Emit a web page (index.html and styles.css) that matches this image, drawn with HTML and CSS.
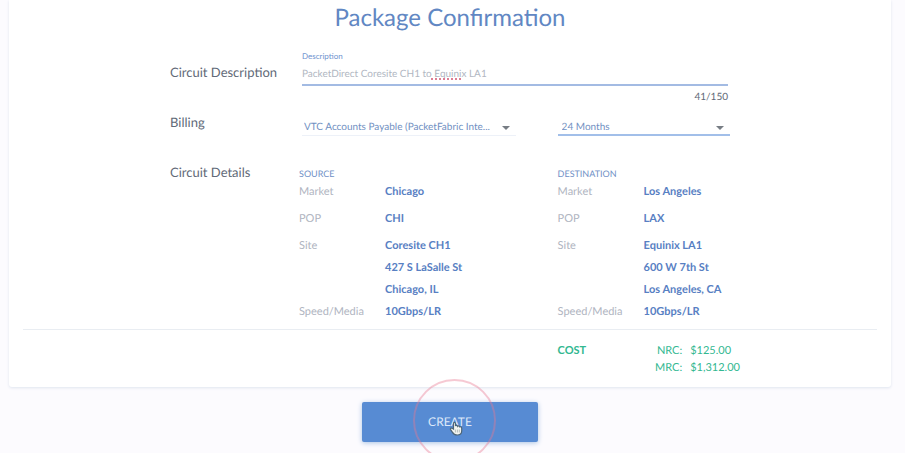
FILE: index.html
```html
<!DOCTYPE html>
<html lang="en">
<head>
<meta charset="utf-8">
<title>Package Confirmation</title>
<link rel="stylesheet" href="styles.css">
</head>
<body>
<form class="page">
  <main class="card">
    <h1 class="title">Package Confirmation</h1>

    <div class="form">
      <div class="row row-description">
        <label class="row-label" for="description">Circuit Description</label>
        <div class="field">
          <label class="field-caption" for="description">Description</label>
          <div class="input-wrap">
            <input class="text-input" id="description" type="text" maxlength="150" value="PacketDirect Coresite CH1 to Equinix LA1" spellcheck="false">
            <span class="squiggle"></span>
          </div>
          <div class="counter">41/150</div>
        </div>
      </div>

      <div class="row row-billing">
        <label class="row-label" for="account">Billing</label>
        <div class="columns">
          <div class="select-wrap select-account">
            <select id="account">
              <option>VTC Accounts Payable (PacketFabric Inte...</option>
            </select>
          </div>
          <div class="select-wrap select-term">
            <select id="term" aria-label="Term">
              <option>24 Months</option>
            </select>
          </div>
        </div>
      </div>

      <div class="row row-details">
        <h2 class="row-label">Circuit Details</h2>
        <div class="columns">
          <section>
            <h3 class="endpoint">SOURCE</h3>
            <dl class="details">
              <dt>Market</dt><dd>Chicago</dd>
              <dt>POP</dt><dd>CHI</dd>
              <dt>Site</dt><dd>Coresite CH1<br>427 S LaSalle St<br>Chicago, IL</dd>
              <dt>Speed/Media</dt><dd>10Gbps/LR</dd>
            </dl>
          </section>
          <section>
            <h3 class="endpoint">DESTINATION</h3>
            <dl class="details">
              <dt>Market</dt><dd>Los Angeles</dd>
              <dt>POP</dt><dd>LAX</dd>
              <dt>Site</dt><dd>Equinix LA1<br>600 W 7th St<br>Los Angeles, CA</dd>
              <dt>Speed/Media</dt><dd>10Gbps/LR</dd>
            </dl>
          </section>
        </div>
      </div>
    </div>

    <hr class="divider">

    <div class="form">
      <div class="row">
        <div class="columns cost-columns">
          <div class="cost">
            <strong>COST</strong>
            <dl class="prices">
              <dt>NRC:</dt><dd>$125.00</dd>
              <dt>MRC:</dt><dd>$1,312.00</dd>
            </dl>
          </div>
        </div>
      </div>
    </div>
  </main>

  <div class="actions">
    <button class="create" type="button">CREATE
      <span class="ripple"></span>
      <svg class="pointer" viewBox="0 0 14 16" aria-hidden="true">
        <path d="M4.500 8V3.500C4.500 2 6.500 2 6.500 3.500V6c.4-.9 2-.8 2.200.3.600-.7 1.900-.4 2.100.600.9-.5 1.900.1 1.900 1.300V11c0 2.500-1.500 4-4.500 4-2.700 0-3.700-1-4.900-2.900L1.600 9.600C.9 8.300 2.500 7.200 4.500 9Z" fill="#f4f5f0" stroke="#4d6577" stroke-width="1.200"/>
        <path d="M6.400 9.500v3M8.400 9.500v3M10.300 9.500v3" fill="none" stroke="#9aa6a6" stroke-width=".7"/>
      </svg>
    </button>
  </div>
</form>
</body>
</html>
```
FILE: styles.css
```css
* {
  box-sizing: border-box;
}

body {
  margin: 0;
  background: #fcfbfe;
  color: #626a78;
  font-family: Lato, "Liberation Sans", sans-serif;
  font-size: 11px;
  text-rendering: geometricPrecision;
}

h1, h2, h3, dl, dd {
  margin: 0;
}

.page {
  overflow: hidden;
  padding: 0 14px 11px 9px;
}

.card {
  padding: 3px 14px 11px;
  background: #fff;
  border-radius: 0 0 3px 3px;
  box-shadow: 0 1px 3px #dfe5ef;
}

.title {
  color: #6187c3;
  font-size: 24px;
  font-weight: 400;
  line-height: 30px;
  text-align: center;
}

.form {
  max-width: 560px;
  margin: 0 auto;
}

.row {
  display: grid;
  grid-template-columns: 129px 1fr;
}

.row-label {
  font-size: 13px;
  font-weight: 400;
  line-height: 18px;
}

.row-description {
  padding-top: 17px;
}

.row-description > .row-label {
  padding-top: 13px;
}

.field {
  padding: 0 2px 0 3px;
}

.field-caption {
  display: block;
  color: #6f93cf;
  font-size: 8px;
  line-height: 12px;
}

.input-wrap {
  position: relative;
}

.text-input {
  display: block;
  width: 100%;
  height: 24px;
  padding: 2px 0 0;
  border: 0;
  border-bottom: 2px solid #a3bbe3;
  background: transparent;
  color: #b1b7c2;
  font: inherit;
  font-size: 10px;
  text-rendering: inherit;
}

.squiggle {
  position: absolute;
  left: 129px;
  top: 16px;
  width: 30px;
  border-bottom: 2px dotted #dd7e94;
}

.counter {
  padding-top: 3px;
  font-size: 10px;
  line-height: 16px;
  text-align: right;
}

.row-billing {
  padding-top: 8px;
}

.columns {
  display: grid;
  grid-template-columns: 3fr 2fr;
}

.select-wrap {
  position: relative;
  padding-top: 5px;
}

.select-wrap::after {
  content: "";
  position: absolute;
  right: 6px;
  top: 13px;
  border: 4px solid transparent;
  border-top-color: #777d84;
  border-bottom: 0;
}

.select-account {
  margin: 0 42px 0 3px;
}

.select-wrap select {
  display: block;
  width: 100%;
  height: 18px;
  padding: 1px 16px 0 2px;
  border: 0;
  border-bottom: 1px solid #edf1f8;
  border-radius: 0;
  appearance: none;
  background: transparent;
  color: #7190c2;
  font: inherit;
  font-size: 10px;
  text-rendering: inherit;
}

.select-wrap.select-term select {
  padding-left: 4px;
  border-bottom: 2px solid #a2bfe9;
}

.row-details {
  padding-top: 27px;
}

.endpoint {
  padding-top: 4px;
  color: #6f8fc6;
  font-size: 9px;
  font-weight: 400;
  line-height: 14px;
}

.details {
  display: grid;
  grid-template-columns: 86px 1fr;
  color: #5880c3;
  font-weight: 700;
  line-height: 22px;
}

.details dt {
  color: #b0b5c1;
  font-weight: 400;
}

.details dd:nth-of-type(-n + 2) {
  margin-bottom: 5px;
}

.divider {
  height: 1px;
  margin: 6px 0 12px;
  border: 0;
  background: #e9edf2;
}

.cost-columns {
  grid-column: 2;
}

.cost {
  grid-column: 2;
  display: flex;
  justify-content: space-between;
  color: #33b891;
  line-height: 17px;
}

.prices {
  display: grid;
  grid-template-columns: auto auto;
  column-gap: 8px;
  margin-right: -10px;
}

.prices dt {
  text-align: right;
}

.actions {
  padding-top: 15px;
  text-align: center;
}

.create {
  position: relative;
  width: 176px;
  height: 40px;
  padding: 0 0 2px;
  border: 0;
  border-radius: 2px;
  background: #578bd3;
  box-shadow: 0 1px 5px #a9c3e4;
  color: #dce8f9;
  font: inherit;
  font-size: 12px;
  text-rendering: inherit;
}

.ripple {
  position: absolute;
  left: 51px;
  top: -23px;
  width: 83px;
  height: 83px;
  border: 2px solid rgba(232, 120, 145, 0.4);
  border-radius: 50%;
}

.pointer {
  position: absolute;
  left: 87px;
  top: 18px;
  width: 14px;
  height: 16px;
}
```
